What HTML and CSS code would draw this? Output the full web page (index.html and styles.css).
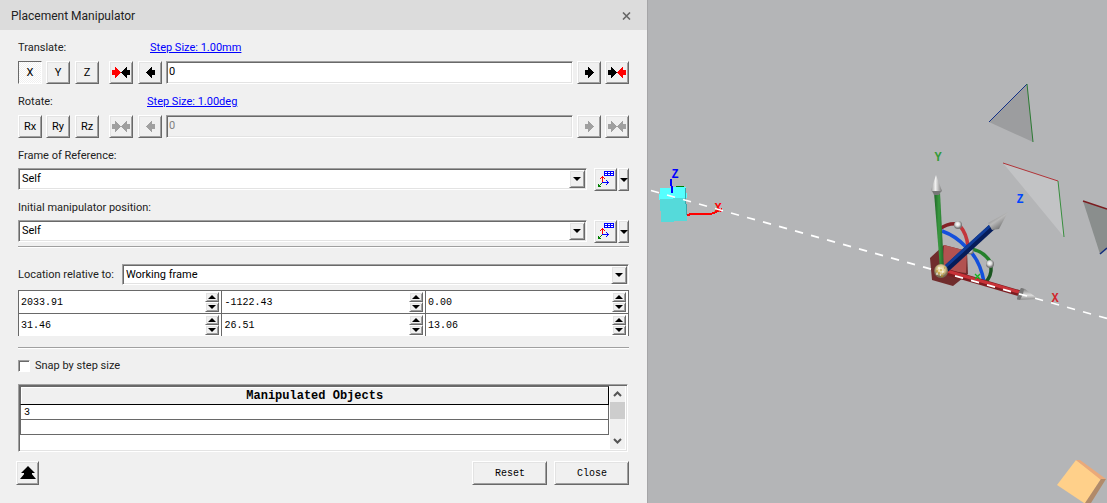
FILE: index.html
```html
<!DOCTYPE html>
<html lang="en">
<head>
<meta charset="utf-8">
<title>Placement Manipulator</title>
<link rel="stylesheet" href="styles.css">
</head>
<body>
<svg class="defs" width="0" height="0" aria-hidden="true">
  <symbol id="left" viewBox="0 0 9 11"><path d="M0 5h1v-1h1v-1h1v-1h1v-1h1v-1h1v3h3v5h-3v3h-1v-1h-1v-1h-1v-1h-1v-1h-1v-1h-1z" fill="currentColor"/></symbol>
  <symbol id="right" viewBox="0 0 9 11"><path d="M9 5h-1v-1h-1v-1h-1v-1h-1v-1h-1v-1h-1v3h-3v5h3v3h1v-1h1v-1h1v-1h1v-1h1v-1h1z" fill="currentColor"/></symbol>
  <symbol id="down" viewBox="0 0 8 4"><path d="M0 0H8L4 4Z" fill="#000"/></symbol>
  <symbol id="up" viewBox="0 0 8 4"><path d="M0 4H8L4 0Z" fill="#000"/></symbol>
  <symbol id="frame" viewBox="0 0 16 17" shape-rendering="crispEdges">
    <path d="M6 0h10v5H6z" fill="#00f"/>
    <path d="M7 1h2v1H7zM10 1h2v1h-2zM13 1h2v1h-2zM7 3h2v1H7zM10 3h2v1h-2zM13 3h2v1h-2z" fill="#fff"/>
    <path d="M4 5h1v6H4zM3 6h3v1H3zM2 7h1v1H2zM6 7h1v1H6z" fill="#f00"/>
    <path d="M4 11h7v1H4zM9 10h1v3H9zM8 9h1v1H8zM8 13h1v1H8z" fill="#00f"/>
    <path d="M3 12h1v1H3zM2 13h1v1H2zM0 13h1v3H0zM1 14h1v2H1zM2 15h1v1H2z" fill="#008000"/>
  </symbol>
</svg>
<main class="app">
  <section class="dialog" aria-label="Placement Manipulator">
    <header class="titlebar">
      <h1 class="title">Placement Manipulator</h1>
      <button class="dismiss" aria-label="Dismiss"><svg width="9" height="8" viewBox="0 0 9 8"><path d="M1 .5 8 7.500M8 .5 1 7.500" stroke="#666" stroke-width="1.600"/></svg></button>
    </header>
    <form class="form">
      <div class="caption caption-translate"><label for="translate">Translate:</label><a href="#">Step Size: 1.00mm</a></div>
      <div class="axis-row">
        <button type="button" class="btn pressed" aria-pressed="true">X</button>
        <button type="button" class="btn">Y</button>
        <button type="button" class="btn">Z</button>
        <button type="button" class="btn" aria-label="Jump back"><svg class="arrow red"><use href="#right"/></svg><svg class="arrow"><use href="#left"/></svg></button>
        <button type="button" class="btn" aria-label="Step back"><svg class="arrow"><use href="#left"/></svg></button>
        <input class="field" id="translate" type="text" value="0">
        <button type="button" class="btn" aria-label="Step forward"><svg class="arrow"><use href="#right"/></svg></button>
        <button type="button" class="btn" aria-label="Jump forward"><svg class="arrow"><use href="#right"/></svg><svg class="arrow red"><use href="#left"/></svg></button>
      </div>
      <div class="caption caption-rotate"><label for="rotate">Rotate:</label><a href="#">Step Size: 1.00deg</a></div>
      <div class="axis-row">
        <button type="button" class="btn">Rx</button>
        <button type="button" class="btn">Ry</button>
        <button type="button" class="btn">Rz</button>
        <button type="button" class="btn" disabled aria-label="Jump back"><svg class="arrow"><use href="#right"/></svg><svg class="arrow"><use href="#left"/></svg></button>
        <button type="button" class="btn" disabled aria-label="Step back"><svg class="arrow"><use href="#left"/></svg></button>
        <input class="field" id="rotate" type="text" value="0" disabled>
        <button type="button" class="btn" disabled aria-label="Step forward"><svg class="arrow"><use href="#right"/></svg></button>
        <button type="button" class="btn" disabled aria-label="Jump forward"><svg class="arrow"><use href="#right"/></svg><svg class="arrow"><use href="#left"/></svg></button>
      </div>
      <div class="caption caption-reference"><label for="reference">Frame of Reference:</label></div>
      <div class="frame-row">
        <div class="combo"><select id="reference"><option>Self</option></select><span class="combo-btn"><svg class="tri"><use href="#down"/></svg></span></div>
        <button type="button" class="btn" aria-label="Pick frame"><svg class="frame-icon"><use href="#frame"/></svg></button>
        <button type="button" class="btn" aria-label="Frame options"><svg class="tri"><use href="#down"/></svg></button>
      </div>
      <div class="caption"><label for="position">Initial manipulator position:</label></div>
      <div class="frame-row">
        <div class="combo"><select id="position"><option>Self</option></select><span class="combo-btn"><svg class="tri"><use href="#down"/></svg></span></div>
        <button type="button" class="btn" aria-label="Pick frame"><svg class="frame-icon"><use href="#frame"/></svg></button>
        <button type="button" class="btn" aria-label="Frame options"><svg class="tri"><use href="#down"/></svg></button>
      </div>
      <hr class="rule">
      <div class="location">
        <label for="relative">Location relative to:</label>
        <div class="combo"><select id="relative"><option>Working frame</option></select><span class="combo-btn"><svg class="tri"><use href="#down"/></svg></span></div>
      </div>
      <div class="coords">
        <div class="spin"><input type="text" aria-label="X" value="2033.91"><button type="button" aria-label="Increase X"><svg class="tri"><use href="#up"/></svg></button><button type="button" aria-label="Decrease X"><svg class="tri"><use href="#down"/></svg></button></div>
        <div class="spin"><input type="text" aria-label="Y" value="-1122.43"><button type="button" aria-label="Increase Y"><svg class="tri"><use href="#up"/></svg></button><button type="button" aria-label="Decrease Y"><svg class="tri"><use href="#down"/></svg></button></div>
        <div class="spin"><input type="text" aria-label="Z" value="0.00"><button type="button" aria-label="Increase Z"><svg class="tri"><use href="#up"/></svg></button><button type="button" aria-label="Decrease Z"><svg class="tri"><use href="#down"/></svg></button></div>
        <div class="spin"><input type="text" aria-label="Rx" value="31.46"><button type="button" aria-label="Increase Rx"><svg class="tri"><use href="#up"/></svg></button><button type="button" aria-label="Decrease Rx"><svg class="tri"><use href="#down"/></svg></button></div>
        <div class="spin"><input type="text" aria-label="Ry" value="26.51"><button type="button" aria-label="Increase Ry"><svg class="tri"><use href="#up"/></svg></button><button type="button" aria-label="Decrease Ry"><svg class="tri"><use href="#down"/></svg></button></div>
        <div class="spin"><input type="text" aria-label="Rz" value="13.06"><button type="button" aria-label="Increase Rz"><svg class="tri"><use href="#up"/></svg></button><button type="button" aria-label="Decrease Rz"><svg class="tri"><use href="#down"/></svg></button></div>
      </div>
      <hr class="rule rule-coords">
      <div class="snap"><input type="checkbox" id="snap"><label for="snap">Snap by step size</label></div>
      <div class="list">
        <div class="list-body">
          <table>
            <thead><tr><th>Manipulated Objects</th></tr></thead>
            <tbody><tr><td>3</td></tr><tr><td></td></tr></tbody>
          </table>
        </div>
        <div class="scroll">
          <button type="button" aria-label="Scroll up"><svg width="9" height="6" viewBox="0 0 9 6"><path d="M1 5 4.500 1.500 8 5" fill="none" stroke="#555" stroke-width="2"/></svg></button>
          <span class="thumb"></span>
          <button type="button" aria-label="Scroll down"><svg width="9" height="6" viewBox="0 0 9 6"><path d="M1 1 4.500 4.500 8 1" fill="none" stroke="#555" stroke-width="2"/></svg></button>
        </div>
      </div>
      <div class="footer">
        <button type="button" class="btn collapse" aria-label="Collapse"><svg width="16" height="14" viewBox="0 0 16 14"><path d="M8 0 15 7H11L16 13H0L5 7H1Z"/><path d="M4 7.500H12" stroke="#000"/></svg></button>
        <button type="button" class="btn action">Reset</button>
        <button type="button" class="btn action">Close</button>
      </div>
    </form>
  </section>
  <section class="viewport" aria-label="3D view">
    <svg class="scene" viewBox="648 0 459 503" preserveAspectRatio="xMinYMin slice">
      <defs>
        <linearGradient id="cone"><stop offset="0" stop-color="#999"/><stop offset=".4" stop-color="#f2f2f2"/><stop offset="1" stop-color="#777"/></linearGradient>
        <linearGradient id="coneTilt" x1=".2" y1=".1" x2=".8" y2=".9"><stop offset="0" stop-color="#777"/><stop offset=".45" stop-color="#b8b8b8"/><stop offset="1" stop-color="#666"/></linearGradient>
        <linearGradient id="coneFlat" x1="0" y1="0" x2="0" y2="1"><stop offset="0" stop-color="#777"/><stop offset=".6" stop-color="#ddd"/><stop offset="1" stop-color="#888"/></linearGradient>
        <linearGradient id="greenBar"><stop offset="0" stop-color="#1d6425"/><stop offset=".5" stop-color="#3a9a40"/><stop offset="1" stop-color="#206428"/></linearGradient>
        <radialGradient id="ball" cx=".45" cy=".4"><stop offset="0" stop-color="#fff"/><stop offset=".5" stop-color="#ddd"/><stop offset="1" stop-color="#777"/></radialGradient>
        <radialGradient id="origin" cx=".5" cy=".4"><stop offset="0" stop-color="#fff6cf"/><stop offset=".6" stop-color="#d8c48c"/><stop offset="1" stop-color="#776a50"/></radialGradient>
      </defs>
      <g shape-rendering="crispEdges">
        <path d="M660 188 686 187 687 198 659 200Z" fill="#5ff"/>
        <path d="M660 199 685 198 687 221 661 222Z" fill="#55dada"/>
        <path d="M685 189 686 187 687 220 685 198Z" fill="#36a6aa"/>
        <path d="M676 186.500H684" stroke="#008000"/>
        <path d="M671 179 672 193" stroke="#00f" stroke-width="2"/>
        <path d="M687 215 692 214H711L716 212 722 209" stroke="red" stroke-width="2" fill="none"/>
      </g>
      <g class="axis-label">
        <text x="675" y="178" fill="#00f">Z</text>
        <text x="718" y="212" fill="red">X</text>
        <text x="938" y="161" fill="#339a38">Y</text>
        <text x="1020" y="203" fill="#0046ff">Z</text>
        <text x="1055" y="302" fill="#d2262c">X</text>
      </g>
      <path d="M1027 84 989 122 1033 142Z" fill="#9c9d9f"/>
      <path d="M989 122 1027 84" stroke="#123088"/><path d="M1027 84 1033 142" stroke="#2b7a32"/>
      <path d="M1003 163 1058 181 1064 237Z" fill="#c2c3c5"/>
      <path d="M1003 163 1058 181" stroke="#b03438"/><path d="M1058 181 1064 237" stroke="#388e3e"/>
      <path d="M1083 201 1107 209V248L1100 254Z" fill="#8a8e8d"/>
      <path d="M1083 201 1107 209" stroke="#7c1c1f" stroke-width="1.500"/><path d="M1100 254 1107 248" stroke="#122a7c" stroke-width="1.500"/>
      <path d="M944 245 967 251 968 274 953 286 932 280 930 258Z" fill="#702c2c"/>
      <path d="M944 245 967 251 966 273 942 270Z" fill="#b25251"/>
      <g fill="none" stroke-width="3.500">
        <path d="M940 229Q947 223 958 224" stroke="#852126"/>
        <path d="M960 226Q967 234 968 247" stroke="#c3363b"/>
        <path d="M942 231Q956 236 966 247Q980 259 984 282" stroke="#1450dc"/>
        <path d="M971 249Q984 251 991 263" stroke="#25802c"/>
        <path d="M991 266Q992 276 985 283" stroke="#1b5620"/>
      </g>
      <circle cx="970" cy="251" r="3.500" fill="url(#ball)"/>
      <path d="M934 192H940L944 269H940Z" fill="url(#greenBar)"/>
      <path d="M936 175 942 191 938 195 933 194 931 190Z" fill="url(#cone)"/>
      <path d="M932 191H941L939 195H934Z" fill="#777"/>
      <path d="M947 272 1022 294" stroke="#7c1c20" stroke-width="6"/>
      <path d="M947 271 1022 293" stroke="#c83238" stroke-width="3"/>
      <path d="M1021 288 1025 289 1037 298 1037 299 1017 300Z" fill="url(#coneFlat)"/>
      <path d="M1021 288 1024 289 1023 294 1020 300 1017 299 1018 294Z" fill="#777"/>
      <path d="M651 190.500 1107 318.500" stroke="#fff" stroke-width="1.700" stroke-dasharray="8.300 8.320"/>
      <path d="M975 274 980 279M980 274 975 279" stroke="#17b420" stroke-width="1.300"/>
      <path d="M946 269 993 226" stroke="#061c58" stroke-width="7"/>
      <path d="M945 267 991 225" stroke="#103c98" stroke-width="3"/>
      <path d="M988 223 1008 212 999 229 992 230Z" fill="url(#coneTilt)"/>
      <circle cx="958" cy="225" r="4" fill="url(#ball)"/>
      <circle cx="990" cy="264" r="4" fill="url(#ball)"/>
      <circle cx="941" cy="271" r="7" fill="url(#origin)"/>
      <path d="M936 271h2M940 270h2M938 273h2M943 273h1M941 276h2M944 268h1" stroke="#bd9418"/>
      <path d="M938 268h2M942 272h2M936 274h2M940 275h1" stroke="#fff"/>
      <path d="M1076 460 1057 485 1084 503H1086L1101 479Z" fill="#ffd08a"/>
      <path d="M1076 460 1080 460 1106 479 1101 480Z" fill="#eba979"/>
      <path d="M1101 479H1106L1091 503H1085Z" fill="#b18a6a"/>
    </svg>
  </section>
</main>
</body>
</html>
```

FILE: styles.css
```css
* { box-sizing: border-box; }
body { margin: 0; font: 11px/18px Roboto, "Noto Sans", sans-serif; color: #222; }
.defs { position: absolute; }
.app { display: flex; min-height: 100vh; background: #b4b5b7; }
.dialog { flex: 648 1 0; min-width: 0; background: #f0f0f0; border-right: 1px solid #a5a5a7; }
.viewport { flex: 459 1 0; min-width: 0; overflow: hidden; }
.scene { display: block; width: 100%; height: 100vh; }
.axis-label { font: bold 12px "Liberation Mono", monospace; text-anchor: middle; }

.titlebar { display: flex; align-items: center; justify-content: space-between; height: 30px; padding: 2px 16px 0 11px; background: #dcdcdc; }
.title { margin: 0; font-size: 12px; font-weight: 400; }
.dismiss { display: flex; padding: 0; border: 0; background: none; }

.form { padding: 9px 18px 0; }
.caption { display: flex; height: 21px; margin-top: 8px; }
.caption a { color: #00f; }
.caption-translate { display: grid; grid-template-columns: 132px 1fr; height: 22px; margin-top: 0; }
.caption-rotate { display: grid; grid-template-columns: 129px 1fr; height: 22px; margin-top: 9px; }
.caption-reference { margin-top: 9px; }

.btn, .combo-btn, .spin button {
  display: flex; align-items: center; justify-content: center;
  padding: 0; font: inherit; color: #000; background: #f0f0f0;
  border: 1px solid; border-color: #fff #696969 #696969 #fff;
  box-shadow: inset 1px 1px #e3e3e3, inset -1px -1px #a0a0a0;
}
.btn:disabled { color: #a0a0a0; }
.pressed {
  border-color: #696969 #fff #fff #696969; box-shadow: none;
  background: repeating-conic-gradient(#f0f0f0 0 25%, #fff 0 50%) 0 0 / 2px 2px;
}
.arrow { flex: none; width: 9px; height: 11px; }
.red { color: #f00; }
.tri { flex: none; width: 8px; height: 4px; }
.frame-icon { width: 16px; height: 17px; }

.axis-row { display: grid; grid-template-columns: 28px 29px 34px 29px 28px 1fr 28px 24px; height: 23px; }
.axis-row .btn { width: 24px; }
.field {
  min-width: 0; margin-right: 4px; padding: 0 2px 2px; font: inherit; color: #000; background: #fff;
  border: 1px solid; border-color: #a0a0a0 #fff #fff #a0a0a0; box-shadow: inset 1px 1px #696969, inset -1px -1px #e3e3e3;
}
.field:disabled { background: #f0f0f0; color: #808080; }

.frame-row { display: grid; grid-template-columns: 1fr 23px 11px; height: 23px; column-gap: 1px; }
.frame-row .combo { height: 22px; margin-right: 6px; }
.combo {
  display: grid; grid-template-columns: 1fr 16px; padding: 1px; background: #fff;
  border: 1px solid; border-color: #a0a0a0 #fff #fff #a0a0a0; box-shadow: inset 1px 1px #696969, inset -1px -1px #e3e3e3;
}
.combo select { grid-area: 1 / 1 / 2 / 3; appearance: none; min-width: 0; padding: 0 16px 0 2px; border: 0; background: none; font: inherit; color: #000; }
.combo-btn { grid-area: 1 / 2; pointer-events: none; }

.rule { height: 2px; margin: 3px 0 0; border: 0; border-top: 1px solid #a0a0a0; background: #fff; }
.location { display: grid; grid-template-columns: auto 1fr; column-gap: 8px; align-items: center; height: 21px; margin-top: 16px; }
.location .combo { height: 21px; }

.coords { display: grid; grid-template-columns: repeat(3, 1fr); margin-top: 5px; border-right: 1px solid #696969; }
.spin { display: grid; grid-template-columns: 1fr 14px; grid-template-rows: 10px 10px; height: 23px; padding: 1px 2px 1px 0; border: solid #696969; border-width: 1px 0 0 1px; background: #fff; }
.spin input { grid-row: 1 / 3; min-width: 0; padding: 1px 2px 0; border: 0; background: none; font: 10px "Liberation Mono", monospace; color: #000; }

.rule-coords { margin-top: 11px; }
.snap { display: flex; align-items: center; gap: 5px; height: 18px; margin-top: 8px; }
.snap input {
  appearance: none; width: 12px; height: 12px; margin: 0; background: #fff;
  border: 1px solid; border-color: #a0a0a0 #fff #fff #a0a0a0; box-shadow: inset 1px 1px #696969;
}

.list {
  display: grid; grid-template-columns: 1fr 16px; height: 68px; margin: 9px 1px 0 0; padding: 1px; background: #fff;
  border: 1px solid; border-color: #a0a0a0 #fff #fff #a0a0a0; box-shadow: inset 1px 1px #696969, inset -1px -1px #e3e3e3;
}
.list table { width: 100%; border-collapse: separate; border-spacing: 0; }
.list-body { padding-right: 1px; }
.list th {
  height: 19px; padding: 0; font: bold 12px/16px "Liberation Mono", monospace; color: #000; background: #f0f0f0;
  border: 1px solid; border-color: #696969 #000 #000 #696969; box-shadow: inset 1px 1px #fff;
}
.list td { height: 15px; padding: 0 3px; font: 10px/13px "Liberation Mono", monospace; color: #000; border: solid #696969; border-width: 0 1px 1px; }
.scroll { display: flex; flex-direction: column; background: #f0f0f0; margin: 0 1px 1px 0; }
.scroll button { display: flex; align-items: center; justify-content: center; height: 16px; padding: 0; border: 0; background: none; }
.thumb { height: 17px; margin-bottom: auto; background: #cdcdcd; }

.footer { display: flex; gap: 7px; margin: 9px 0 0 -2px; }
.footer .btn { height: 24px; }
.collapse { width: 23px; margin-right: auto; }
.action { width: 75px; font: 10px "Liberation Mono", monospace; }
```
